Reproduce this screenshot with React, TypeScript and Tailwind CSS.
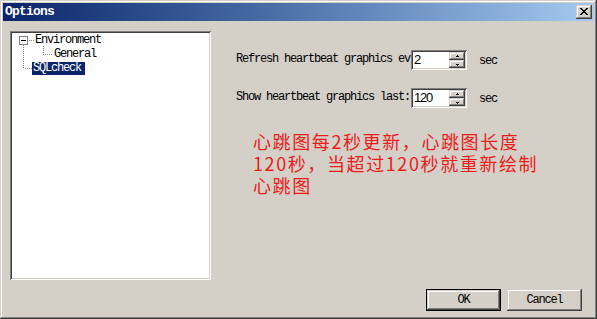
import React from 'react';

const raised =
  'shadow-[inset_-1px_-1px_#404040,inset_1px_1px_#d4d0c8,inset_-2px_-2px_#808080,inset_2px_2px_#ffffff]';
const sunken =
  'shadow-[inset_1px_1px_#808080,inset_-1px_-1px_#ffffff,inset_2px_2px_#404040,inset_-2px_-2px_#d4d0c8]';

const CloseButton: React.FC = () => (
  <div className={`w-[16px] h-[14px] bg-[#d4d0c8] flex items-center justify-center ${raised}`}>
    <svg width="8" height="7" viewBox="0 0 8 7" shapeRendering="crispEdges" className="-mt-px">
      <path
        d="M0 0h2v1H0zM6 0h2v1H6zM1 1h2v1H1zM5 1h2v1H5zM2 2h4v1H2zM3 3h2v1H3zM2 4h4v1H2zM1 5h2v1H1zM5 5h2v1H5zM0 6h2v1H0zM6 6h2v1H6z"
        fill="#000"
      />
    </svg>
  </div>
);

const SpinHalf: React.FC<{ up?: boolean }> = ({ up }) => (
  <div className={`h-[8px] flex items-center justify-center bg-[#d4d0c8] ${raised}`}>
    <svg width="5" height="3" viewBox="0 0 5 3" shapeRendering="crispEdges">
      <path d={up ? 'M2 0h1v1H2zM1 1h3v1H1z' : 'M1 1h3v1H1zM2 2h1v1H2z'} fill="#000" />
    </svg>
  </div>
);

const SpinRow: React.FC<{ label: string; value: string; className?: string }> = ({ label, value, className = '' }) => (
  <div className={`flex items-center h-[20px] ${className}`}>
    <div className="w-[175px] overflow-hidden whitespace-nowrap -mt-[2px]">{label}</div>
    <div className={`w-[56px] h-[20px] bg-white p-[2px] flex ${sunken}`}>
      <div className="flex-1 pl-[1px] font-['Liberation_Sans',sans-serif] text-[13px] leading-[16px]">{value}</div>
      <div className="w-[16px] flex flex-col">
        <SpinHalf up />
        <SpinHalf />
      </div>
    </div>
    <div className="ml-[12px] mt-[2px]">sec</div>
  </div>
);

const Tree: React.FC = () => (
  <div className={`relative w-[201px] h-[249px] bg-white p-[2px] ${sunken}`}>
    <svg className="absolute left-0 top-0" width="60" height="50" shapeRendering="crispEdges">
      <g fill="#808080">
        {/* main vertical line */}
        {[14, 16, 18, 20, 22, 24, 26, 28, 30, 32, 34, 36].map(y => (
          <rect key={'v' + y} x="13" y={y} width="1" height="1" />
        ))}
        {/* to Environment */}
        {[19, 21, 23].map(x => (
          <rect key={'e' + x} x={x} y="9" width="1" height="1" />
        ))}
        {/* to SQLcheck */}
        {[15, 17, 19, 21].map(x => (
          <rect key={'s' + x} x={x} y="37" width="1" height="1" />
        ))}
        {/* General branch */}
        {[15, 17, 19, 21].map(y => (
          <rect key={'g' + y} x="33" y={y} width="1" height="1" />
        ))}
        {[33, 35, 37, 39, 41].map(x => (
          <rect key={'h' + x} x={x} y="23" width="1" height="1" />
        ))}
        {/* expander box */}
        <rect x="9" y="5" width="9" height="1" />
        <rect x="9" y="13" width="9" height="1" />
        <rect x="9" y="5" width="1" height="9" />
        <rect x="17" y="5" width="1" height="9" />
      </g>
      <rect x="11" y="9" width="5" height="1" fill="#000" />
    </svg>
    <div className="flex flex-col">
      <div className="h-[14px] flex items-center pl-[23px]">Environment</div>
      <div className="h-[14px] flex items-center pl-[42px]">General</div>
      <div className="h-[14px] flex items-center pl-[20px]">
        <span className="h-[13px] leading-[13px] pl-[1px] pr-[4px] bg-[#0a246a] text-white">SQLcheck</span>
      </div>
    </div>
  </div>
);

const DialogButton: React.FC<{ label: string; isDefault?: boolean }> = ({ label, isDefault }) => (
  <div className={`w-[75px] h-[22px] ${isDefault ? 'border border-black' : ''}`}>
    <div className={`w-full h-full bg-[#d4d0c8] flex items-center justify-center ${raised}`}>{label}</div>
  </div>
);

const App: React.FC = () => {
  return (
    <div
      className={`w-[597px] h-[319px] bg-[#d4d0c8] p-[3px] flex flex-col font-['Liberation_Mono',monospace] text-[12px] tracking-[-1.2px] text-black ${raised}`}
    >
      <div className="h-[18px] shrink-0 flex items-center justify-between pl-[2px] pr-[2px] bg-gradient-to-r from-[#0a246a] to-[#a6caf0]">
        <span className="text-white font-bold text-[13px] tracking-[-0.8px]">Options</span>
        <CloseButton />
      </div>

      <div className="flex mt-[10px] ml-[7px]">
        <Tree />
        <div className="ml-[25px] pt-[19px] flex flex-col">
          <SpinRow label="Refresh heartbeat graphics ev" value="2" />
          <SpinRow label="Show heartbeat graphics last:" value="120" className="mt-[18px]" />
          <div className="mt-[22px] ml-[17px] text-[#ec1c1c] text-[18px] leading-[22px] tracking-[1.6px] font-['Noto_Sans_CJK_SC',sans-serif]">
            <div className="h-[22px]">心跳图每2秒更新，心跳图长度</div>
            <div className="h-[22px]">120秒，当超过120秒就重新绘制</div>
            <div className="h-[22px]">心跳图</div>
          </div>
        </div>
      </div>

      <div className="flex justify-end gap-[6px] mt-[9px] mr-[12px]">
        <DialogButton label="OK" isDefault />
        <DialogButton label="Cancel" />
      </div>
    </div>
  );
};

export default App;
